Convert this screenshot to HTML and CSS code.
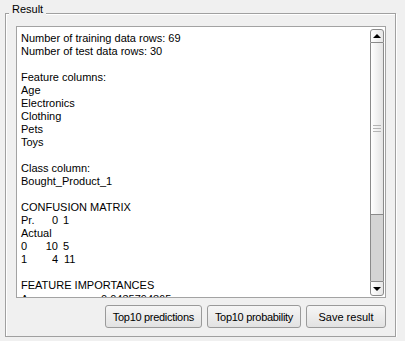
FILE: index.html
```
<!DOCTYPE html>
<html>
<head>
<meta charset="utf-8">
<link rel="stylesheet" href="styles.css">
</head>
<body>
<div class="group">
  <span class="legend">Result</span>
  <div class="textbox">
    <div class="doc">
      <div class="ln">Number of training data rows: 69</div>
      <div class="ln">Number of test data rows: 30</div>
      <div class="ln blank"></div>
      <div class="ln">Feature columns:</div>
      <div class="ln">Age</div>
      <div class="ln">Electronics</div>
      <div class="ln">Clothing</div>
      <div class="ln">Pets</div>
      <div class="ln">Toys</div>
      <div class="ln blank"></div>
      <div class="ln">Class column:</div>
      <div class="ln">Bought_Product_1</div>
      <div class="ln blank"></div>
      <div class="ln">CONFUSION MATRIX</div>
      <div class="ln mrow"><span class="m1">Pr.</span><span class="m2">0</span><span class="m3">1</span></div>
      <div class="ln">Actual</div>
      <div class="ln mrow"><span class="m1">0</span><span class="m2">10</span><span class="m3">5</span></div>
      <div class="ln mrow"><span class="m1">1</span><span class="m2">4</span><span class="m3 m3b">11</span></div>
      <div class="ln blank"></div>
      <div class="ln">FEATURE IMPORTANCES</div>
      <div class="ln frow"><span class="f1">Age</span><span class="f2">0.0435794865</span></div>
    </div>
    <div class="scrollbar">
      <div class="sb-btn sb-up"><span class="arrow-up"></span></div>
      <div class="sb-thumb"><span class="grip"></span></div>
      <div class="sb-track"></div>
      <div class="sb-btn sb-down"><span class="arrow-down"></span></div>
    </div>
  </div>
  <div class="buttons">
    <button class="btn tight">Top10 predictions</button>
    <button class="btn tight">Top10 probability</button>
    <button class="btn">Save result</button>
  </div>
</div>
</body>
</html>
```
FILE: styles.css
```
html, body {
  margin: 0;
  padding: 0;
  background: #f0f0f0;
  font-family: "Liberation Sans", Arial, sans-serif;
  font-size: 11px;
  color: #000;
}

.group {
  position: relative;
  box-sizing: border-box;
  width: 391px;
  height: 324px;
  margin: 13px 0 0 5px;
  padding: 12px 9px 8px 10px;
  border: 1px solid #a0a0a0;
  box-shadow: inset 1px 1px 0 #ffffff, 1px 1px 0 #ffffff;
  display: flex;
  flex-direction: column;
}

.legend {
  position: absolute;
  left: 3px;
  top: -11px;
  padding: 0 3px;
  line-height: 13px;
  background: #f0f0f0;
}

.textbox {
  box-sizing: border-box;
  height: 272px;
  border: 1px solid #a3a3a3;
  background: #ffffff;
  display: flex;
  overflow: hidden;
}

.doc {
  flex: 1;
  padding: 5px 4px 0 4px;
  overflow: hidden;
  line-height: 13px;
  white-space: nowrap;
}

.ln {
  height: 13px;
}

.mrow {
  display: flex;
}

.m1 {
  width: 22px;
}

.m2 {
  width: 15px;
  text-align: right;
}

.m3 {
  margin-left: 5px;
}

.m3b {
  margin-left: 6px;
}

.frow {
  display: flex;
  padding-top: 1px;
}

.f1 {
  width: 80px;
}

.scrollbar {
  width: 14px;
  margin: 2px 1px 1px 0;
  display: flex;
  flex-direction: column;
}

.sb-btn {
  box-sizing: border-box;
  border: 1px solid #8a8a8a;
  background: linear-gradient(to right, #ffffff, #e6e6e6);
  display: flex;
  align-items: center;
  justify-content: center;
}

.sb-up {
  height: 14px;
  border-radius: 3px 3px 0 0;
}

.sb-down {
  height: 15px;
  border-radius: 0 0 3px 3px;
}

.arrow-up {
  width: 0;
  height: 0;
  border-left: 4px solid transparent;
  border-right: 4px solid transparent;
  border-bottom: 4px solid #000;
}

.arrow-down {
  width: 0;
  height: 0;
  border-left: 4px solid transparent;
  border-right: 4px solid transparent;
  border-top: 4px solid #000;
}

.sb-thumb {
  box-sizing: border-box;
  height: 171px;
  border-left: 1px solid #8a8a8a;
  border-right: 1px solid #8a8a8a;
  background: linear-gradient(to right, #ffffff, #e4e4e4);
  display: flex;
  align-items: center;
  justify-content: center;
}

.grip {
  width: 8px;
  height: 7px;
  background: repeating-linear-gradient(to bottom, #b4b4b4 0 1px, transparent 1px 3px);
}

.sb-track {
  flex: 1;
  box-sizing: border-box;
  border-left: 1px solid #8a8a8a;
  border-right: 1px solid #8a8a8a;
  border-top: 1px solid #8a8a8a;
  background: #d4d4d4;
}

.buttons {
  margin-top: 7px;
  display: flex;
  justify-content: flex-end;
  gap: 5px;
}

.btn {
  box-sizing: border-box;
  height: 23px;
  min-width: 80px;
  padding: 0 6px;
  margin: 0;
  border: 1px solid #9a9a9a;
  border-radius: 3px;
  background: linear-gradient(to bottom, #f6f6f6, #e2e2e2);
  font-family: "Liberation Sans", Arial, sans-serif;
  font-size: 11px;
  color: #000;
}

.tight {
  letter-spacing: -0.3px;
  padding: 0 7px;
}
```
